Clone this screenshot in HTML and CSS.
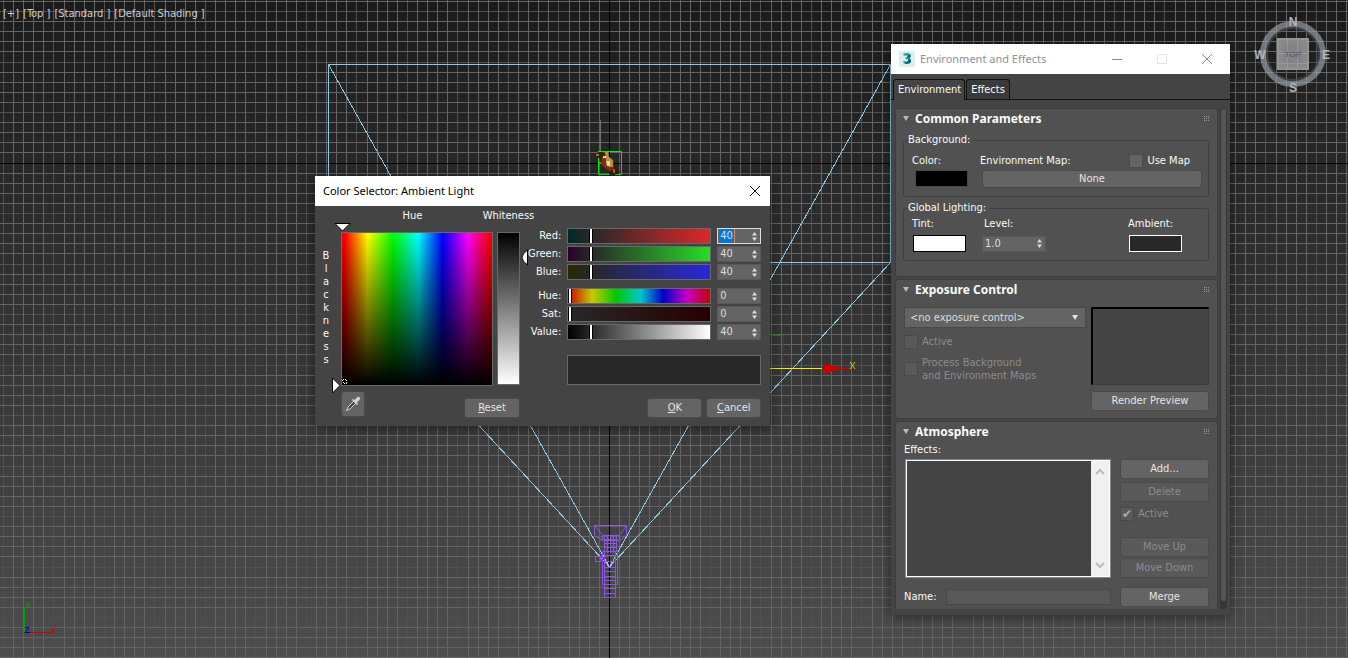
FILE: index.html
```html
<!DOCTYPE html>
<html lang="en">
<head>
<meta charset="utf-8">
<title>Environment and Effects</title>
<link rel="stylesheet" href="styles.css">
</head>
<body>
<main class="viewport">
  <svg class="scene" aria-hidden="true">
    <defs>
      <pattern id="grid" x="3" y="62" width="101" height="101" patternUnits="userSpaceOnUse">
        <path class="grid-major" d="M0 .5H101M0 50.5H101M.5 0V101M50.5 0V101"/>
        <path class="grid-minor" d="M0 10.5H101M0 20.5H101M0 30.5H101M0 40.5H101M0 60.5H101M0 70.5H101M0 80.5H101M0 90.5H101M10.5 0V101M20.5 0V101M30.5 0V101M40.5 0V101M61.5 0V101M71.5 0V101M81.5 0V101M91.5 0V101"/>
      </pattern>
    </defs>
    <rect width="100%" height="100%" fill="url(#grid)"/>
    <rect y="163" width="100%" height="1"/>
    <rect x="609" width="1" height="100%"/>
    <g class="frustum">
      <path d="M328.500 262.500V64.500H890.500V262.500Z"/>
      <path d="M609.500 567L328.500 64.500M609.500 567L890.500 64.500M609.500 567L328.500 262.500M609.500 567L890.500 262.500"/>
    </g>
    <path d="M600.500 120V152" stroke="#707070"/>
    <g class="figure">
      <path fill="#3b1a12" d="M597 153l4-2 7 4 5 7 3 6 4 4-3 3-6-1-6-6-5-5z"/>
      <path fill="#7d2f16" d="M602 157l5-1 6 5 1 7-4 4-5-4-4-4z"/>
      <path fill="#b8913f" d="M605 152l3 0 1 5 4 3 0 7-4 0-3-7z"/>
      <path fill="#efd69a" d="M606 161h4v5h-3zM603 156h3v2h-3z"/>
      <path fill="#94702b" d="M596 154h3v2h-3zM599 162h2v2h-2zM613 169h2v4h-2z"/>
      <path fill="none" stroke="#00f000" d="M598.500 158V174.500H610M615 174.500H621.500V151.500H598"/>
    </g>
    <g class="camera">
      <path d="M594.500 525.500H626.500V535.500L619.500 540.500H602.500L594.500 535.500ZM594.500 525.500L602.500 535.500H619.500L626.500 525.500M602.500 535.500V540.500M619.500 535.500V540.500M604.500 536V551.500H616.500V536M607.500 536V553M610.500 536V553M613.500 536V553M604.500 539.500H617M604.500 543.500H616M604.500 547.500H616M602.500 551.500H617.500V584.500H602.500ZM604.500 551V597.500H615.500V551M604.500 555.500H616M604.500 561.500H616M604.500 567.500H616M604.500 571.500H616M604.500 576.500H616M604.500 580.500H616M604.500 588.500H616M604.500 593.500H616M595.500 556.500H600.500V561.500H595.500ZM600.500 556.500L604 554"/>
    </g>
    <path fill="none" stroke="#108010" d="M610 335.500H783"/>
    <path fill="none" stroke="#d00000" d="M783.500 335V368"/>
    <path fill="none" stroke="#f4ee00" d="M610 368.500H822"/>
    <path fill="#cf0000" d="M823 364l8 1 6 2 13 1v1l-13 1-6 2-8 2z"/>
    <path fill="none" stroke="#d8d000" d="M850 362L855 369M855 362L850 369"/>
    <path fill="none" stroke="#00a000" d="M24.500 632V607"/>
    <path fill="none" stroke="#d00000" d="M25 632.500H51"/>
    <path fill="none" stroke="#0a960a" d="M26 602L28 606M30 602L27 609"/>
    <path fill="none" stroke="#b81010" d="M51 627L55 634M55 627L51 634"/>
    <path fill="none" stroke="#0000c8" d="M25 627.500H29L25 632.500H30"/>
  </svg>

  <nav class="view-labels">
    <span>[+]</span><span>[Top ]</span><span>[Standard ]</span><span>[Default Shading ]</span>
  </nav>

  <svg class="viewcube" viewBox="0 0 80 80" role="img" aria-label="View cube: top">
    <circle cx="40" cy="40" r="30" fill="none" stroke="#9aa1aa" stroke-opacity=".68" stroke-width="6"/>
    <circle cx="40" cy="40" r="26" fill="none" stroke="#4f5154" stroke-opacity=".65" stroke-width="2"/>
    <rect x="24" y="24" width="32" height="32" fill="#898989"/>
    <rect x="25" y="25" width="30" height="30" fill="none" stroke="#a0a0a0"/>
    <rect x="30" y="30" width="20" height="20" fill="#818489"/>
    <path stroke="#a0a0a0" stroke-opacity=".6" d="M24 39.500H56M24 49.500H56M34.500 24V56M44.500 24V56"/>
    <text class="cube-face" x="40" y="43">TOP</text>
    <g class="compass"><text x="40" y="12">N</text><text x="73" y="45">E</text><text x="40" y="78">S</text><text x="7" y="45">W</text></g>
  </svg>

  <section class="window environment" aria-labelledby="env-title">
    <header class="titlebar">
      <svg class="app-icon" width="16" height="16" viewBox="0 0 16 16" aria-hidden="true"><rect width="16" height="16" fill="#dceef0"/><path fill="#1d9a9a" d="M4.500 2.500L9 2L11.500 3.500V6L10.500 7L12 8.500V11L10 12.500L7 13L4.500 12V10L7 10.500L9 10V8.500L6.500 8V6.500L8.500 6V4.500H4.500Z"/><path fill="#0b6570" d="M8.500 4.500L11.500 3.500V6L10.500 7L8.500 6.500ZM9 8.500L12 8.500V11L10 12.500L7 13L6 12L9 10.500Z"/></svg>
      <h1 class="title" id="env-title">Environment and Effects</h1>
      <div class="window-controls">
        <button aria-label="Minimize"><svg width="12" height="12"><path d="M1 6.500H11"/></svg></button>
        <button aria-label="Maximize" disabled><svg width="12" height="12"><path d="M1.500 1.500H10.500V10.500H1.500Z"/></svg></button>
        <button aria-label="Close"><svg width="12" height="12"><path d="M1 1L11 11M11 1L1 11"/></svg></button>
      </div>
    </header>
    <div class="tabs" role="tablist">
      <button class="tab selected" role="tab" aria-selected="true">Environment</button>
      <button class="tab" role="tab" aria-selected="false">Effects</button>
    </div>
    <div class="scroll-area">
      <div class="rollouts">
        <section class="rollout">
          <h2 class="rollout-title"><svg class="chevron" width="6" height="8"><path d="M0 1H6L3 6Z"/></svg><span>Common Parameters</span><i class="grip"></i></h2>
          <fieldset class="group background">
            <legend>Background:</legend>
            <div class="bg-grid">
              <span>Color:</span><span>Environment Map:</span>
              <label class="check"><input type="checkbox"><span>Use Map</span></label>
              <button class="swatch black" aria-label="Background color"></button>
              <button class="btn map">None</button>
            </div>
          </fieldset>
          <fieldset class="group lighting">
            <legend>Global Lighting:</legend>
            <div class="light-grid">
              <span>Tint:</span><label for="level">Level:</label><span>Ambient:</span>
              <button class="swatch white" aria-label="Tint"></button>
              <span class="spinner level"><input id="level" value="1.0"><svg width="5" height="9"><path d="M2.500 0L5 3.500H0ZM0 5.500H5L2.500 9Z"/></svg></span>
              <button class="swatch ambient" aria-label="Ambient"></button>
            </div>
          </fieldset>
        </section>

        <section class="rollout">
          <h2 class="rollout-title"><svg class="chevron" width="6" height="8"><path d="M0 1H6L3 6Z"/></svg><span>Exposure Control</span><i class="grip"></i></h2>
          <div class="exposure">
            <div class="exposure-options">
              <div class="dropdown"><select aria-label="Exposure control"><option>&lt;no exposure control&gt;</option></select><svg width="6" height="5"><path d="M0 0H6L3 5Z"/></svg></div>
              <label class="check off"><input type="checkbox" disabled><span>Active</span></label>
              <label class="check off process"><input type="checkbox" disabled><span>Process Background<br>and Environment Maps</span></label>
            </div>
            <div class="exposure-preview">
              <div class="preview"></div>
              <button class="btn">Render Preview</button>
            </div>
          </div>
        </section>

        <section class="rollout last">
          <h2 class="rollout-title"><svg class="chevron" width="6" height="8"><path d="M0 1H6L3 6Z"/></svg><span>Atmosphere</span><i class="grip"></i></h2>
          <label class="effects-label" for="effects">Effects:</label>
          <div class="atmosphere">
            <div class="list">
              <select id="effects" size="4"></select>
              <div class="list-scroll"><svg width="10" height="7"><path d="M1 6L5 2L9 6"/></svg><svg width="10" height="7"><path d="M1 1L5 5L9 1"/></svg></div>
            </div>
            <div class="actions">
              <button class="btn">Add...</button>
              <button class="btn" disabled>Delete</button>
              <label class="check off"><input type="checkbox" checked disabled><span>Active</span></label>
              <button class="btn up" disabled>Move Up</button>
              <button class="btn down" disabled>Move Down</button>
            </div>
          </div>
          <div class="name-row"><label for="name">Name:</label><input id="name" class="name" disabled><button class="btn">Merge</button></div>
        </section>
      </div>
      <div class="scrollbar"><div class="thumb"></div></div>
    </div>
  </section>

  <section class="window selector" aria-labelledby="sel-title">
    <header class="titlebar">
      <h1 class="title" id="sel-title">Color Selector: Ambient Light</h1>
      <div class="window-controls"><button aria-label="Close"><svg width="12" height="12"><path d="M1 1L11 11M11 1L1 11"/></svg></button></div>
    </header>
    <div class="selector-body">
      <div class="picker">
        <div class="blackness" aria-label="Blackness"><span>B</span><span>l</span><span>a</span><span>c</span><span>k</span><span>n</span><span>e</span><span>s</span><span>s</span></div>
        <div class="hue-column">
          <span class="axis-label hue-label">Hue</span>
          <div class="spectrum">
            <svg class="hue-mark" width="17" height="9"><path d="M1 .5H16L8.500 8Z"/></svg>
            <svg class="black-mark" width="9" height="17"><path d="M.5 1V16L8 8.500Z"/></svg>
            <svg class="cross" width="6" height="6"><path d="M0 2L2 0M3 0L5 2M5 3L4 5M1 3L3 5" stroke="#fff"/></svg>
          </div>
          <button class="btn dropper" aria-label="Sample screen color"><svg width="16" height="16"><path fill="#464646" stroke="#d4d4d4" d="M1.500 14.500L3 11L9 5L11 7L5 13Z"/><path fill="#d4d4d4" d="M7 4L8 3L9.500 4L12 1.500Q14 0 15 2Q15.500 3 12 6.500L13 8L12 9Z"/></svg></button>
        </div>
        <div class="white-column">
          <span class="axis-label">Whiteness</span>
          <div class="whiteness"><svg class="white-mark" width="7" height="17"><path d="M6.500 1V16Q1 12 1 8.500Q1 5 6.500 1Z"/></svg></div>
          <button class="btn reset"><u>R</u>eset</button>
        </div>
      </div>
      <div class="channels">
        <div class="channel"><label for="r">Red:</label><div class="track red"><i class="at40"></i></div><span class="spinner focused"><b class="selected-value"><input id="r" value="40"></b><svg width="5" height="9"><path d="M2.500 0L5 3.500H0ZM0 5.500H5L2.500 9Z"/></svg></span></div>
        <div class="channel"><label for="g">Green:</label><div class="track green"><i class="at40"></i></div><span class="spinner"><input id="g" value="40"><svg width="5" height="9"><path d="M2.500 0L5 3.500H0ZM0 5.500H5L2.500 9Z"/></svg></span></div>
        <div class="channel"><label for="b">Blue:</label><div class="track blue"><i class="at40"></i></div><span class="spinner"><input id="b" value="40"><svg width="5" height="9"><path d="M2.500 0L5 3.500H0ZM0 5.500H5L2.500 9Z"/></svg></span></div>
        <div class="channel split"><label for="h">Hue:</label><div class="track hue"><i></i></div><span class="spinner"><input id="h" value="0"><svg width="5" height="9"><path d="M2.500 0L5 3.500H0ZM0 5.500H5L2.500 9Z"/></svg></span></div>
        <div class="channel"><label for="s">Sat:</label><div class="track sat"><i></i></div><span class="spinner"><input id="s" value="0"><svg width="5" height="9"><path d="M2.500 0L5 3.500H0ZM0 5.500H5L2.500 9Z"/></svg></span></div>
        <div class="channel"><label for="v">Value:</label><div class="track value"><i class="at40"></i></div><span class="spinner"><input id="v" value="40"><svg width="5" height="9"><path d="M2.500 0L5 3.500H0ZM0 5.500H5L2.500 9Z"/></svg></span></div>
        <div class="result"></div>
        <div class="dialog-buttons"><button class="btn"><u>O</u>K</button><button class="btn"><u>C</u>ancel</button></div>
      </div>
    </div>
  </section>
</main>
</body>
</html>
```
FILE: styles.css
```css
* { box-sizing: border-box; }
body {
  margin: 0;
  font: 11px/14px "DejaVu Sans Condensed", "Noto Sans", sans-serif;
  color: #fafafa;
}
button, input, select { font: inherit; color: inherit; margin: 0; padding: 0; }
svg { display: block; flex: none; }

.viewport {
  position: relative;
  height: 100vh;
  overflow: hidden;
  background: linear-gradient(#1b1b1b, #4d4d4d);
}
.scene { position: absolute; inset: 0; width: 100%; height: 100%; }
.grid-minor { stroke: #646464; }
.grid-major { stroke: #505050; }
.frustum { fill: none; stroke: #90c8e4; shape-rendering: crispEdges; }
.camera { fill: none; stroke: #8a55e0; }
.view-labels { position: relative; display: flex; gap: 4px; padding: 7px 3px; color: #ccc; }
.viewcube { position: absolute; right: 15px; top: 14px; width: 80px; height: 80px; }
.cube-face { font: 8px "Liberation Sans", sans-serif; fill: #50535a; text-anchor: middle; }
.compass { font: bold 12px "Liberation Sans", sans-serif; fill: #b4b4b4; text-anchor: middle; }

/* Windows */
.window { position: absolute; background: #444; box-shadow: 0 2px 12px rgba(0, 0, 0, .45); }
.titlebar { display: flex; align-items: center; height: 30px; padding: 0 8px; background: #fff; color: #000; }
.title { flex: 1; margin: 0; font: 11px/16px "Noto Sans", sans-serif; }
.window-controls { display: flex; gap: 33px; }
.window-controls button { border: 0; background: none; }
.window-controls path { fill: none; stroke: #111; }
.environment { left: 891px; top: 44px; width: 339px; }
.environment .titlebar { color: #909090; gap: 5px; padding-right: 17px; }
.environment .window-controls path { stroke: #888; }
.environment .window-controls button:disabled path { stroke: #e4e4e4; }

/* Shared controls */
.btn {
  height: 20px;
  border: 1px solid #4a4a4a;
  border-radius: 3px;
  background: #646464;
  color: #e4e4e4;
  text-align: center;
}
.btn:disabled { background: #595959; color: #8c8c8c; }
.check { display: flex; align-items: center; gap: 4px; }
.check input { appearance: none; width: 14px; height: 14px; border: 1px solid #4a4a4a; background: #646464; flex: none; }
.check.off { color: #8c8c8c; }
.check.off input { background: #595959; }
.check input:checked::before { content: "✔"; display: block; font: 12px/12px "DejaVu Sans", sans-serif; text-align: center; color: #aaa; }
.spinner { display: flex; align-items: center; height: 16px; padding: 0 3px 0 2px; border: 1px solid #585858; background: #646464; color: #ddd; }
.spinner input { flex: 1; width: 100%; min-width: 0; height: 14px; border: 0; outline: 0; background: none; }
.spinner path { fill: #ddd; }
.swatch { width: 53px; height: 17px; border: 1px solid #484848; }
.swatch.black { background: #000; }
.swatch.white { background: #fff; border: 1px solid #000; }
.swatch.ambient { background: #282828; border: 1px solid #fff; }

/* Tabs and rollouts */
.tabs { display: flex; align-items: flex-end; gap: 1px; height: 26px; padding: 0 2px; border-bottom: 1px solid #111; }
.tab { height: 20px; padding: 0 4px; border: 1px solid #111; border-bottom: 0; border-radius: 3px 3px 0 0; background: #3a3a3a; color: #fafafa; }
.tab.selected { height: 21px; margin-bottom: -1px; padding: 0 3px 0 4px; background: #444; }
.scroll-area { display: flex; gap: 2px; padding: 8px 3px 6px 4px; }
.rollouts { flex: 1; }
.scrollbar { width: 7px; background: #363636; border-radius: 3px; }
.thumb { height: 494px; border: 1px solid #383838; border-radius: 3px; background: #555; }
.rollout { border: 1px solid #3d3d3d; border-radius: 3px; background: #515151; padding: 2px 8px 0 7px; margin-bottom: 2px; height: 169px; }
.rollout + .rollout { height: 140px; }
.rollout.last { height: 188px; border-bottom: 0; border-radius: 3px 3px 0 0; margin: 0; }
.rollout-title { display: flex; align-items: center; gap: 6px; margin: 0; height: 16px; font: bold 12px/16px "Noto Sans", sans-serif; }
.rollout-title span { flex: 1; }
.chevron path { fill: #b8b8b8; }
.dropdown path { fill: #e0e0e0; }
.grip { width: 6px; height: 6px; background: repeating-conic-gradient(#999 0 25%, transparent 0 100%) 0 0 / 2px 2px; }
.group { margin: 6px 0 0; padding: 0 6px 0 8px; border: 1px solid #3f3f3f; border-radius: 3px; height: 64px; }
.group legend { padding: 0 4px 0 0; margin-left: -4px; line-height: 14px; }
.lighting { margin-top: 4px; height: 60px; }
.bg-grid { display: grid; grid-template-columns: 68px 1fr auto; row-gap: 2px; padding-top: 7px; align-items: center; }
.bg-grid .check { padding-right: 12px; }
.bg-grid .swatch { margin-left: 3px; align-self: start; }
.bg-grid .map { grid-column: span 2; height: 18px; margin-left: 2px; }
.light-grid { display: grid; grid-template-columns: 70px 1fr 74px; gap: 4px 2px; padding-top: 2px; align-items: center; }
.light-grid .swatch { margin-left: 1px; }
.level { width: 64px; margin-left: -2px; }
.exposure { display: grid; grid-template-columns: 182px 1fr; gap: 5px; padding: 9px 0 0 1px; }
.exposure-options { display: flex; flex-direction: column; gap: 7px; }
.dropdown { display: flex; align-items: center; height: 21px; padding: 0 7px 0 5px; border: 1px solid #484848; background: #646464; }
.dropdown select { appearance: none; flex: 1; border: 0; background: none; color: #ddd; }
.process { line-height: 13px; }
.exposure-preview { display: flex; flex-direction: column; gap: 6px; }
.preview { height: 78px; border: 1px solid #3a3a3a; border-top: 2px solid #000; border-left: 2px solid #000; background: #444; }
.effects-label { display: block; padding: 3px 0 0 1px; }
.atmosphere { display: grid; grid-template-columns: 1fr 89px; gap: 9px; padding: 2px 0 0 2px; }
.list { display: flex; height: 119px; padding: 1px; border: 1px solid #828790; background: #fff; }
.list select { flex: 1; border: 0; border-radius: 0; background: #444; outline: 0; }
.list-scroll { display: flex; flex-direction: column; justify-content: space-between; align-items: center; width: 18px; padding: 7px 0; background: #f0f0f0; }
.list-scroll path { fill: none; stroke: #bdbdbd; stroke-width: 2; }
.actions { display: flex; flex-direction: column; gap: 3px; }
.actions .check { height: 18px; }
.actions .up { margin-top: 11px; }
.actions .down { margin-top: -2px; }
.name-row { display: grid; grid-template-columns: auto 1fr 89px; align-items: center; gap: 9px; padding: 9px 0 0 1px; }
.name { min-width: 0; height: 16px; border: 1px solid #484848; background: #585858; }

/* Color selector */
.selector { left: 315px; top: 176px; width: 455px; }
.selector .titlebar { padding-right: 9px; }
.selector-body { display: flex; gap: 8px; height: 220px; padding: 3px 9px 8px 5px; }
.picker { display: flex; gap: 4px; }
.blackness { display: flex; flex-direction: column; align-items: center; width: 12px; padding-top: 40px; margin-right: 5px; line-height: 13px; }
.hue-column { width: 152px; }
.white-column { width: 23px; display: flex; flex-direction: column; align-items: center; }
.axis-label { display: block; height: 23px; text-align: center; white-space: nowrap; }
.hue-label { padding-right: 9px; }
.spectrum {
  position: relative;
  height: 154px;
  border: 1px solid #686868;
  background: linear-gradient(transparent, #000), linear-gradient(90deg, red 2%, #ff0 17%, #0f0 34%, #0ff 51%, #00f 67%, #f0f 84%, red 99%);
}
.whiteness { position: relative; width: 23px; height: 154px; border: 1px solid #686868; background: linear-gradient(#000, #fff); }
.hue-mark, .black-mark, .white-mark, .cross { position: absolute; }
.hue-mark { left: -8px; top: -10px; }
.black-mark { left: -10px; bottom: -9px; }
.white-mark { right: -9px; top: 16px; }
.cross { left: 0; bottom: 0; }
.cross path { fill: none; }
.hue-mark path, .black-mark path, .white-mark path { fill: #fff; stroke: #000; }
.dropper { display: grid; place-items: center; width: 24px; height: 26px; margin-top: 5px; }
.reset { flex: none; width: 56px; margin-top: 13px; align-self: flex-end; }
.channels { flex: 1; display: flex; flex-direction: column; gap: 2px; padding-top: 18px; }
.channel { display: grid; grid-template-columns: 1fr 144px 44px; column-gap: 6px; align-items: center; height: 16px; }
.channel label { justify-self: end; line-height: 18px; }
.split { margin-top: 6px; }
.track { height: 16px; border: 1px solid #686868; }
.track i { display: block; width: 4px; height: 14px; border: solid #000; border-width: 0 1px; background: #fff; }
.track .at40 { margin-left: 21px; }
.red { background: linear-gradient(90deg, #002828, #282828 16%, #dc2828); }
.green { background: linear-gradient(90deg, #280028, #282828 16%, #28dc28); }
.blue { background: linear-gradient(90deg, #282800, #282828 16%, #2828dc); }
.hue { background: linear-gradient(90deg, #c80000, #c8c800 17%, #00c800 34%, #00c8c8 51%, #0000c8 67%, #c800c8 84%, #c80000); }
.sat { background: linear-gradient(90deg, #282828, #280000); }
.value { background: linear-gradient(90deg, #000, #fff); }
.focused { border-color: #ddd; }
.selected-value { display: flex; flex: 1; font-weight: normal; background: linear-gradient(90deg, #0078d7 14px, #f08030 14px 15px, transparent 15px); }
.result { height: 30px; margin-top: 14px; margin-left: 39px; border: 1px solid #686868; background: #282828; }
.dialog-buttons { display: flex; justify-content: flex-end; gap: 4px; padding-top: 11px; }
.dialog-buttons .btn { width: 55px; }
```
